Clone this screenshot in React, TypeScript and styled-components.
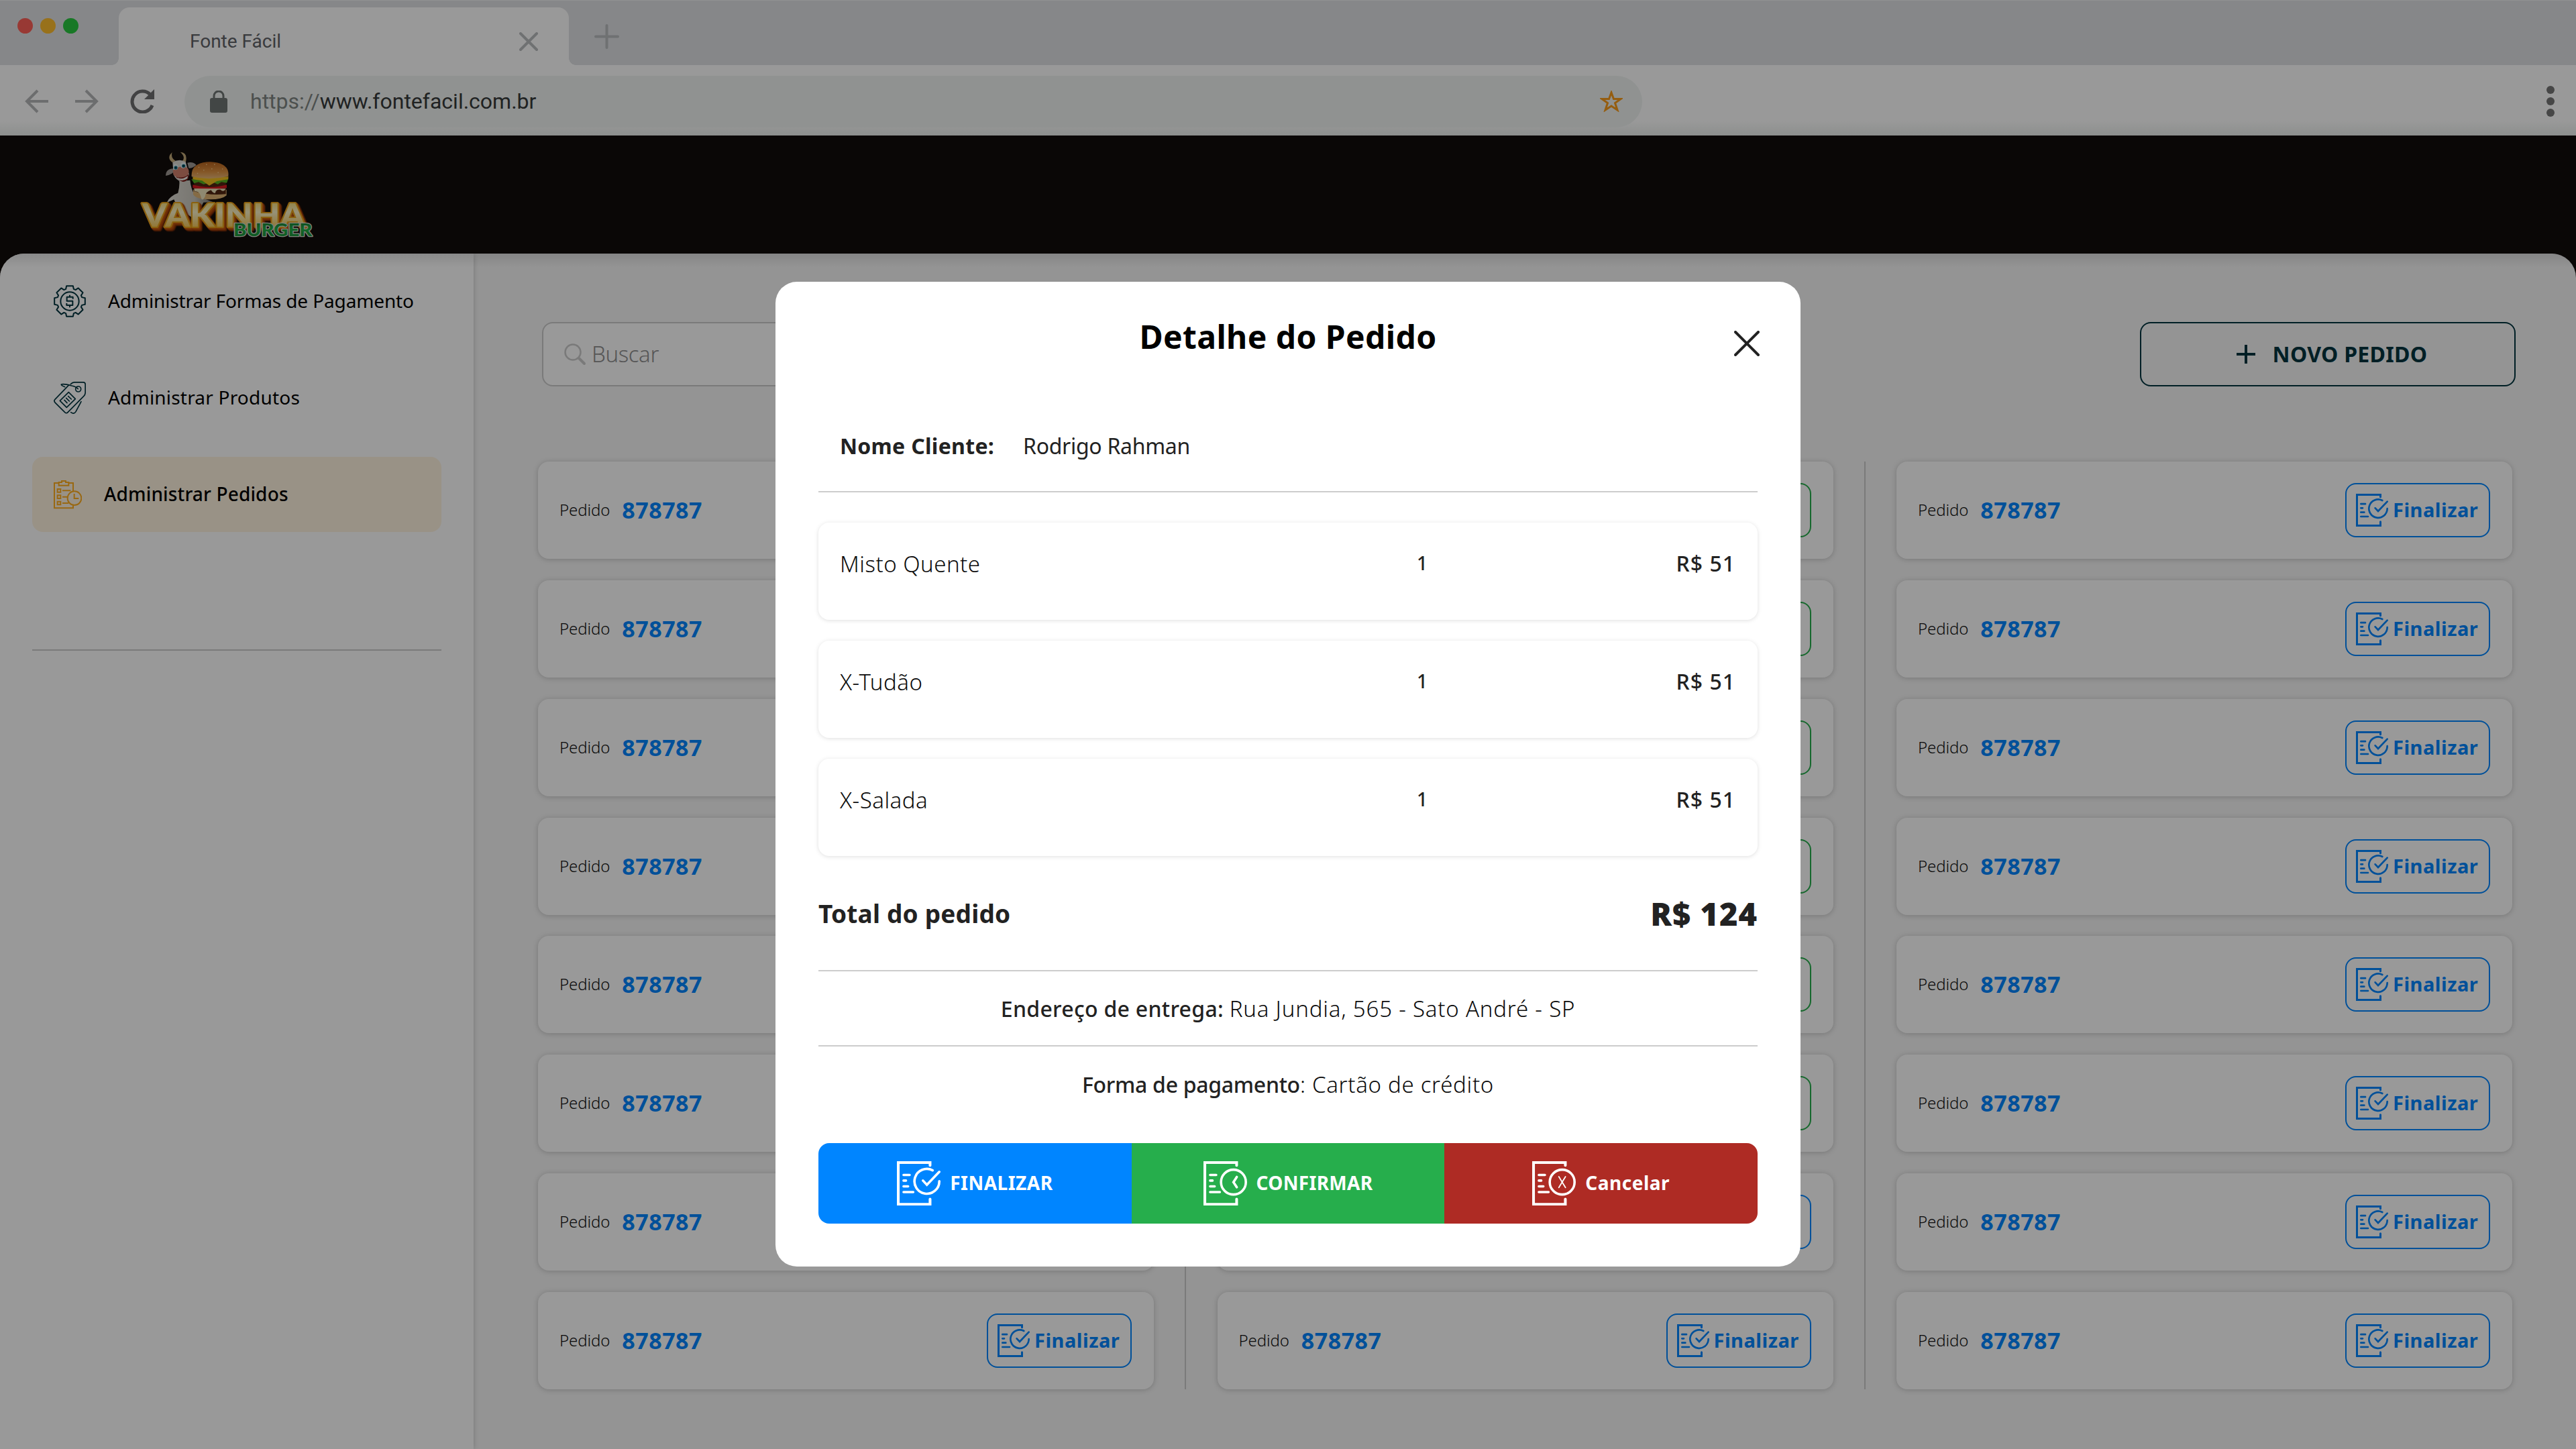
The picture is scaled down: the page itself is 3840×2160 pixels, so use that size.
import React from 'react';
import styled, { createGlobalStyle, css } from 'styled-components';

const GlobalStyle = createGlobalStyle`
  * { box-sizing: border-box; }
  body { margin: 0; background: #949494; }
`;

const sans = '"Noto Sans", "Open Sans", sans-serif';

const Page = styled.div`
  position: relative;
  display: flex;
  flex-direction: column;
  width: 3840px;
  height: 2160px;
  overflow: hidden;
  background: #120c0a;
  font-family: ${sans};
`;

type LabelProps = { $size: number; $weight?: number; $ls?: number; $color?: string };
const Label = styled.span<LabelProps>`
  font-size: ${(p) => p.$size}px;
  font-weight: ${(p) => p.$weight ?? 400};
  letter-spacing: ${(p) => p.$ls ?? 0}px;
  color: ${(p) => p.$color ?? '#222222'};
  line-height: 1.2;
  white-space: pre;
`;

/* Browser chrome */
const TabStrip = styled.div`
  display: flex;
  height: 97px;
  flex: none;
  background: #dfe1e4;
  border-top: 1px solid #f1f2f4;
  padding-left: 26px;
`;
const Lights = styled.div`
  display: flex;
  gap: 11px;
  width: 151px;
  padding-top: 26px;
`;
const Light = styled.i<{ $color: string }>`
  width: 23px;
  height: 23px;
  border-radius: 50%;
  background: ${(p) => p.$color};
`;
const Tab = styled.div`
  position: relative;
  display: flex;
  align-items: center;
  justify-content: space-between;
  width: 671px;
  margin-top: 10px;
  padding: 15px 46px 0 106px;
  border-radius: 16px 16px 0 0;
  background: #ffffff;
  font-family: Roboto, sans-serif;
  &::before, &::after {
    content: '';
    position: absolute;
    bottom: 0;
    width: 10px;
    height: 10px;
  }
  &::before { left: -10px; background: radial-gradient(circle at 0 0, transparent 9.5px, #fff 10px); }
  &::after { right: -10px; background: radial-gradient(circle at 100% 0, transparent 9.5px, #fff 10px); }
`;
const NewTab = styled.div`
  padding: 35px 0 0 38px;
`;
const Toolbar = styled.div`
  display: flex;
  align-items: center;
  height: 105px;
  flex: none;
  padding: 3px 32px 0 36px;
  background: linear-gradient(#ffffff 84px, #ebefed 105px);
`;
const NavIcons = styled.div`
  display: flex;
  gap: 38px;
  width: 239px;
  & > :last-child { margin-left: 8px; }
`;
const Address = styled.div`
  display: flex;
  align-items: center;
  width: 2173px;
  height: 77px;
  padding: 0 29px 0 38px;
  border-radius: 39px;
  background: #f0f4f2;
  font-family: Roboto, sans-serif;
`;
const Url = styled.div`
  display: flex;
  flex: 1;
  padding-left: 34px;
`;
const MenuDots = styled.div`
  display: flex;
  flex-direction: column;
  gap: 5px;
  margin-left: auto;
`;
const Dot = styled.i`
  width: 12px;
  height: 12px;
  border-radius: 50%;
  background: #757575;
`;

/* Application shell */
const Header = styled.header`
  height: 176px;
  flex: none;
  padding: 8px 0 0 190px;
`;
const Body = styled.div`
  position: relative;
  display: flex;
  flex: 1;
  border-radius: 36px 36px 0 0;
  overflow: hidden;
  background: #f7f7f7;
  &::after {
    content: '';
    position: absolute;
    inset: 0 0 auto 0;
    height: 20px;
    background: linear-gradient(rgba(0, 0, 0, 0.1), rgba(0, 0, 0, 0));
  }
`;
const Sidebar = styled.aside`
  display: flex;
  flex-direction: column;
  flex: none;
  width: 706px;
  padding: 0 48px;
  background: #ffffff;
  box-shadow: 0 0 8px rgba(0, 0, 0, 0.2);
`;
const MenuItem = styled.div<{ $active?: boolean }>`
  display: flex;
  align-items: center;
  height: 112px;
  margin-top: 32px;
  padding-left: 32px;
  border-radius: 16px;
  gap: 33px;
  ${(p) => p.$active && css`background: #fff4e0;`}
  &:first-child { margin-top: 15px; }
`;
const SideRule = styled.hr`
  width: 610px;
  height: 2px;
  margin: 175px 0 0;
  border: 0;
  background: #cccccc;
`;
const Main = styled.main`
  display: flex;
  flex-direction: column;
  flex: 1;
  padding: 102px 90px 0 96px;
`;
const Actions = styled.div`
  display: flex;
  justify-content: space-between;
  padding-left: 6px;
`;
const Search = styled.div`
  display: flex;
  align-items: center;
  width: 900px;
  height: 96px;
  padding-left: 30px;
  gap: 8px;
  border: 2px solid #cccccc;
  border-radius: 16px;
  background: #ffffff;
`;
const NewOrder = styled.div`
  display: flex;
  align-items: center;
  justify-content: center;
  width: 560px;
  height: 96px;
  gap: 26px;
  padding-left: 12px;
  border: 2px solid #00343f;
  border-radius: 16px;
`;
const Board = styled.div`
  display: flex;
  margin-top: 112px;
`;
const Column = styled.div`
  display: flex;
  flex-direction: column;
  gap: 31.85px;
  width: 918px;
`;
const Separator = styled.i`
  width: 2px;
  margin: 0 46.25px;
  background: #cccccc;
`;
const Card = styled.div`
  display: flex;
  align-items: center;
  height: 145px;
  padding: 0 33px 0 32px;
  border-radius: 16px;
  background: #ffffff;
  box-shadow: 0 1px 8px rgba(0, 0, 0, 0.2);
`;
const CardNumber = styled.div`
  display: flex;
  align-items: center;
  flex: 1;
  gap: 18px;
`;
const CardButton = styled.div<{ $color: string }>`
  display: flex;
  align-items: center;
  min-width: 216px;
  height: 81px;
  padding: 0 14px;
  gap: 7px;
  border: 2px solid ${(p) => p.$color};
  border-radius: 16px;
  color: ${(p) => p.$color};
`;

/* Order dialog */
const Overlay = styled.div`
  position: absolute;
  inset: 0;
  display: flex;
  justify-content: center;
  align-items: flex-start;
  padding-top: 420px;
  background: rgba(0, 0, 0, 0.4);
`;
const Dialog = styled.section`
  display: flex;
  flex-direction: column;
  width: 1528px;
  height: 1468px;
  padding: 0 64px;
  border-radius: 32px;
  background: #ffffff;
`;
const DialogTop = styled.div`
  display: grid;
  grid-template-columns: 1fr auto 1fr;
  height: 170px;
  padding-top: 53px;
`;
const Close = styled.div`
  grid-column: 3;
  justify-self: end;
  padding: 20px 0 0;
  margin-right: -3px;
`;
const TitleCell = styled.div`
  grid-column: 2;
`;
const Client = styled.div`
  display: flex;
  align-items: center;
  height: 144px;
  padding: 8px 32px 0;
  gap: 43px;
  border-bottom: 2px solid #cccccc;
`;
const Items = styled.div`
  display: flex;
  flex-direction: column;
  gap: 31px;
  padding-top: 45px;
`;
const Item = styled.div`
  display: grid;
  grid-template-columns: 1fr 40px 447px;
  align-items: start;
  height: 145px;
  padding: 42px 33px 0 32px;
  border-radius: 16px;
  box-shadow: 0 1px 6px rgba(0, 0, 0, 0.13);
`;
const Center = styled.div`
  display: flex;
  justify-content: center;
  padding-top: 2px;
`;
const End = styled.div`
  display: flex;
  justify-content: flex-end;
`;
const Total = styled.div`
  display: flex;
  align-items: center;
  justify-content: space-between;
  height: 172px;
  padding-top: 3px;
  border-bottom: 2px solid #cccccc;
`;
const Info = styled.div<{ $ruled?: boolean }>`
  display: flex;
  align-items: center;
  justify-content: center;
  height: 112px;
  padding-top: 2px;
  ${(p) => p.$ruled && css`border-bottom: 2px solid #cccccc;`}
`;
const Buttons = styled.div`
  display: flex;
  height: 120px;
  margin-top: 32px;
  border-radius: 16px;
  overflow: hidden;
`;
const Action = styled.div<{ $color: string }>`
  display: flex;
  flex: 1;
  align-items: center;
  justify-content: center;
  gap: 14px;
  color: #ffffff;
  background: ${(p) => p.$color};
`;

/* Drawings */
const OrderIcon = ({ kind, size }: { kind: 'check' | 'clock' | 'cancel'; size: number }) => (
  <svg width={size} height={size * 1.021} viewBox="0 0 144 147" fill="none" stroke="currentColor" strokeWidth="8" strokeLinecap="round">
    <path d="M109.500 14V4.500H4.500V142.500H109.500V125" strokeWidth="9" />
    <path d="M22 45.500H42M22 64H30M22 83H37M22 102H54" />
    {kind === 'check' ? <path d="M118 30A41 41 0 1 0 140 66M86 64L99 78L140 35" /> : <circle cx="99" cy="69" r="41" />}
    {kind === 'clock' && <path d="M110 52L99 69L110 86" />}
    {kind === 'cancel' && <path d="M88 51L110 87M110 51L88 87" strokeWidth="4" />}
  </svg>
);

const GearIcon = () => {
  const pts: string[] = [];
  for (let i = 0; i < 8; i++) {
    [[-18, 57], [-12, 70], [12, 70], [18, 57]].forEach(([deg, r]) => {
      const a = ((i * 45 + deg) * Math.PI) / 180;
      pts.push(`${72 + r * Math.sin(a)},${72 - r * Math.cos(a)}`);
    });
  }
  return (
    <svg width="48" height="48" viewBox="0 0 144 144" fill="none" stroke="#00343f" strokeWidth="6" strokeLinejoin="round">
      <polygon points={pts.join(' ')} />
      <circle cx="72" cy="72" r="41" />
      <path d="M86 62V53H59V71H85V90H58V81M72 44V53M72 90V100" />
    </svg>
  );
};

const TagIcon = () => (
  <svg width="48" height="48" viewBox="0 0 144 144" fill="none" stroke="#00343f" strokeWidth="5" strokeLinejoin="round" strokeLinecap="round">
    <path d="M76 11Q84 2.500 92 2.500H132Q141.500 2.500 141.500 12V50Q141 58 135 64L64 136Q57 144 50 137L7 94Q-1 86 6 79L66 17" />
    <circle cx="110" cy="33" r="12" />
    <path d="M109 32Q101 22 80 18Q45 8 34 12Q32 16 50 23" />
    <path d="M28 85L67 47L97 77L58 115ZM48 82L60 95M56 73L70 87M65 65L79 78" />
    <path d="M77 137Q91 147 99 134L123 89" />
  </svg>
);

const ClipboardIcon = () => (
  <svg width="42" height="43" viewBox="0 0 126 129" fill="none" stroke="#ffad1f" strokeWidth="6">
    <path d="M87 112V124H3V12H23M67 12H87V48M23 9H36V3H54V9H67V23H23ZM17 39H31V53H17ZM17 67H31V81H17ZM17 95H31V109H17ZM39 46H76M39 74H62M39 102H67" />
    <circle cx="93" cy="80" r="31" />
    <path d="M92 60V81H112" />
  </svg>
);

const Wordmark = styled.text`
  font: 900 143px Lato, sans-serif;
  fill: url(#gold);
  stroke: #e7a21c;
  stroke-width: 12px;
  stroke-linejoin: round;
  paint-order: stroke;
  filter: drop-shadow(4px 5px 0 #c85a0e) drop-shadow(4px 4px 0 #b04a0a) drop-shadow(5px 5px 0 #8f3208);
`;
const Submark = styled.text`
  font: 900 82px Lato, sans-serif;
  fill: url(#leaf);
  stroke: #d5dccf;
  stroke-width: 8px;
  stroke-linejoin: round;
  paint-order: stroke;
`;

const Logo = () => (
  <svg width="300" height="160" viewBox="0 0 900 480">
    <defs>
      <linearGradient id="gold" x1="0" y1="0" x2="0" y2="1">
        <stop offset="0" stopColor="#f3cb3c" />
        <stop offset="0.45" stopColor="#fbf3c8" />
        <stop offset="1" stopColor="#f0b62c" />
      </linearGradient>
      <linearGradient id="bun" x1="0" y1="0" x2="0" y2="1">
        <stop offset="0" stopColor="#b5621d" />
        <stop offset="0.6" stopColor="#dc9142" />
        <stop offset="1" stopColor="#e9b878" />
      </linearGradient>
      <linearGradient id="hide" x1="0" y1="0" x2="1" y2="0">
        <stop offset="0" stopColor="#dedbd3" />
        <stop offset="0.6" stopColor="#c9c6bd" />
        <stop offset="1" stopColor="#77746c" />
      </linearGradient>
      <linearGradient id="leaf" x1="0" y1="0" x2="0" y2="1">
        <stop offset="0" stopColor="#13662a" />
        <stop offset="0.5" stopColor="#22ad45" />
        <stop offset="1" stopColor="#178033" />
      </linearGradient>
    </defs>
    <path d="M176 276Q190 244 226 233Q234 205 232 180L280 176Q284 215 300 240L352 262L384 274L340 275L300 350L225 300L208 262Z" fill="url(#hide)" />
    <path d="M203 97Q180 84 190 62L200 51Q192 76 216 90ZM245 91Q262 72 236 50Q272 52 260 97Z" fill="#c2a878" />
    <path d="M205 124Q172 124 171 156Q190 154 206 140ZM268 98Q294 92 308 108Q290 124 274 122Z" fill="#a09a94" />
    <path d="M202 96Q232 78 260 94L276 150Q268 186 244 184Q216 176 206 150Z" fill="#dddad4" />
    <path d="M214 156Q246 172 274 148Q276 182 248 183Q228 178 214 156Z" fill="#7b211d" />
    <path d="M222 164Q248 176 270 156L268 168Q246 184 226 172Z" fill="#f1eee6" />
    <path d="M203 132Q236 106 268 120Q284 140 262 158Q226 172 206 152Z" fill="#cf7f6c" />
    <ellipse cx="215" cy="117" rx="11" ry="13" fill="#e6eef0" />
    <ellipse cx="249" cy="109" rx="12" ry="13" fill="#e6eef0" />
    <circle cx="216" cy="120" r="8" fill="#17758b" />
    <circle cx="251" cy="112" r="8" fill="#17758b" />
    <circle cx="216" cy="120" r="4" fill="#0b2a33" />
    <circle cx="251" cy="112" r="4" fill="#0b2a33" />
    <path d="M294 218H443V244Q424 262 370 262Q310 262 294 240Z" fill="#deb274" />
    <path d="M298 182H440V238Q370 246 298 226Z" fill="#512611" />
    <path d="M292 196Q370 218 444 196V211Q370 222 292 211Z" fill="#d71820" />
    <path d="M298 213L440 214Q430 232 416 218Q396 216 392 234Q380 232 374 220Q350 226 347 250Q332 276 328 248Q322 224 300 226Z" fill="#efe4bc" />
    <path d="M286 172L452 168L444 188L420 184L404 194L380 184L340 194L318 184L298 190Z" fill="#55ae20" />
    <path d="M292 160L452 160L450 172L400 180L366 200L334 178L292 172Z" fill="#f1be1e" />
    <path d="M287 160Q282 96 370 94Q458 98 451 158Q368 178 287 160Z" fill="url(#bun)" />
    <path d="M318 116l3 3M352 104l3 3M388 104l3 3M424 124l2 3M340 130l3 3M376 124l3 3M404 140l3 3M312 144l3 3" stroke="#f5ce91" strokeWidth="4" />
    <Wordmark x="66" y="383" textLength="728" lengthAdjust="spacingAndGlyphs">VAKINHA</Wordmark>
    <Submark x="474" y="427" textLength="352" lengthAdjust="spacingAndGlyphs">BURGER</Submark>
  </svg>
);

const BLUE = '#0085ff';
const GREEN = '#26ae4c';

const OrderCard = ({ confirm }: { confirm?: boolean }) => (
  <Card>
    <CardNumber>
      <Label $size={24} $weight={300} $ls={-0.1} $color="#111">Pedido</Label>
      <Label $size={34} $weight={700} $ls={0.5} $color={BLUE}>878787</Label>
    </CardNumber>
    <CardButton $color={confirm ? GREEN : BLUE}>
      <OrderIcon kind={confirm ? 'clock' : 'check'} size={48} />
      <Label $size={29} $weight={700} $ls={0.5} $color="inherit">{confirm ? 'Confirmar' : 'Finalizar'}</Label>
    </CardButton>
  </Card>
);

const rows = Array.from({ length: 8 }, (_, i) => i);
const products = ['Misto Quente', 'X-Tudão', 'X-Salada'];

export default function App() {
  return (
    <Page>
      <GlobalStyle />
      <TabStrip>
        <Lights>
          <Light $color="#fe5f57" />
          <Light $color="#febc2e" />
          <Light $color="#28c840" />
        </Lights>
        <Tab>
          <Label $size={28} $color="#5f6368">Fonte Fácil</Label>
          <svg width="28" height="28" viewBox="0 0 28 28" stroke="#b9bcbf" strokeWidth="4" strokeLinecap="round"><path d="M2 2L26 26M26 2L2 26" /></svg>
        </Tab>
        <NewTab>
          <svg width="37" height="37" viewBox="0 0 37 37" stroke="#b9bcbf" strokeWidth="4" strokeLinecap="round"><path d="M2 18.500H35M18.500 2V35" /></svg>
        </NewTab>
      </TabStrip>
      <Toolbar>
        <NavIcons>
          <svg width="37" height="36" viewBox="0 0 37 36" fill="none" stroke="#b5b6b7" strokeWidth="4"><path d="M36 18H4M20 2L4 18L20 34" /></svg>
          <svg width="37" height="36" viewBox="0 0 37 36" fill="none" stroke="#b5b6b7" strokeWidth="4"><path d="M1 18H33M17 2L33 18L17 34" /></svg>
          <svg width="37" height="36" viewBox="0 0 37 36" fill="none" stroke="#6e6f70" strokeWidth="5"><path d="M33 24A15.500 15.500 0 1 1 30 8" /><path d="M36 0V15H21Z" fill="#6e6f70" stroke="none" /></svg>
        </NavIcons>
        <Address>
          <svg width="26" height="33" viewBox="0 0 26 33"><rect y="11" width="26" height="22" rx="3" fill="#6f7674" /><path d="M6 12V8A7 7 0 0 1 20 8V12" fill="none" stroke="#6f7674" strokeWidth="3" /></svg>
          <Url>
            <Label $size={32} $color="#7f8583">https://</Label>
            <Label $size={32} $color="#36393a">www.fontefacil.com.br</Label>
          </Url>
          <svg width="34" height="32" viewBox="0 0 34 32" fill="none" stroke="#f89b1c" strokeWidth="3"><path d="M17 3L20.500 12.500H31L22.500 18.500L26 29L17 23L8 29L11.500 18.500L3 12.500H13.500Z" /></svg>
        </Address>
        <MenuDots><Dot /><Dot /><Dot /></MenuDots>
      </Toolbar>
      <Header><Logo /></Header>
      <Body>
        <Sidebar>
          <MenuItem><GearIcon /><Label $size={28} $ls={-0.13} $color="#000">Administrar Formas de Pagamento</Label></MenuItem>
          <MenuItem><TagIcon /><Label $size={28} $ls={0.2} $color="#000">Administrar Produtos</Label></MenuItem>
          <MenuItem $active><ClipboardIcon /><Label $size={28} $weight={500} $ls={0.15} $color="#000">Administrar Pedidos</Label></MenuItem>
          <SideRule />
        </Sidebar>
        <Main>
          <Actions>
            <Search>
              <svg width="34" height="34" viewBox="0 0 34 34" fill="none" stroke="#cccccc" strokeLinecap="round"><circle cx="14" cy="14" r="11.500" strokeWidth="2.500" /><path d="M23 23L31 31" strokeWidth="4" /></svg>
              <Label $size={33} $weight={300} $ls={-0.4} $color="#8f8f8f">Buscar</Label>
            </Search>
            <NewOrder>
              <svg width="28" height="28" viewBox="0 0 28 28" stroke="#00343f" strokeWidth="4"><path d="M0 14H28M14 0V28" /></svg>
              <Label $size={32} $weight={700} $ls={0.3} $color="#00343f">NOVO PEDIDO</Label>
            </NewOrder>
          </Actions>
          <Board>
            <Column>{rows.map((i) => <OrderCard key={i} />)}</Column>
            <Separator />
            <Column>{rows.map((i) => <OrderCard key={i} confirm={i < 6} />)}</Column>
            <Separator />
            <Column>{rows.map((i) => <OrderCard key={i} />)}</Column>
          </Board>
        </Main>
      </Body>
      <Overlay>
        <Dialog>
          <DialogTop>
            <TitleCell><Label $size={48} $weight={700} $ls={0.4} $color="#000">Detalhe do Pedido</Label></TitleCell>
            <Close><svg width="38" height="38" viewBox="0 0 38 38" stroke="#222" strokeWidth="4" strokeLinecap="round"><path d="M2 2L36 36M36 2L2 36" /></svg></Close>
          </DialogTop>
          <Client>
            <Label $size={32} $weight={700} $ls={0.3}>Nome Cliente:</Label>
            <Label $size={32} $weight={400} $ls={-0.3}>Rodrigo Rahman</Label>
          </Client>
          <Items>
            {products.map((name) => (
              <Item key={name}>
                <Label $size={33} $weight={300} $ls={0.5} $color="#0c0c0c">{name}</Label>
                <Center><Label $size={28} $weight={500}>1</Label></Center>
                <End><Label $size={32} $weight={500} $ls={1}>R$ 51</Label></End>
              </Item>
            ))}
          </Items>
          <Total>
            <Label $size={37} $weight={700} $ls={0.2}>Total do pedido</Label>
            <Label $size={47} $weight={900} $ls={1}>R$ 124</Label>
          </Total>
          <Info $ruled>
            <Label $size={32} $weight={500} $ls={0.3}>Endereço de entrega: </Label>
            <Label $size={33} $weight={300} $ls={0.8} $color="#0c0c0c">Rua Jundia, 565 - Sato André - SP</Label>
          </Info>
          <Info>
            <Label $size={32} $weight={500} $ls={-0.3}>Forma de pagamento</Label>
            <Label $size={33} $weight={300} $ls={0.7} $color="#0c0c0c">: Cartão de crédito</Label>
          </Info>
          <Buttons>
            <Action $color={BLUE}><OrderIcon kind="check" size={65} /><Label $size={28} $weight={700} $ls={0.5} $color="inherit">FINALIZAR</Label></Action>
            <Action $color={GREEN}><OrderIcon kind="clock" size={65} /><Label $size={28} $weight={700} $ls={0.3} $color="inherit">CONFIRMAR</Label></Action>
            <Action $color="#ae2b24"><OrderIcon kind="cancel" size={65} /><Label $size={28} $weight={700} $ls={0.5} $color="inherit">Cancelar</Label></Action>
          </Buttons>
        </Dialog>
      </Overlay>
    </Page>
  );
}
